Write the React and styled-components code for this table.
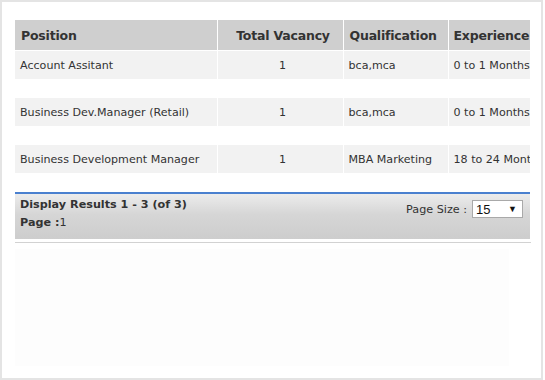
import styled, { createGlobalStyle } from "styled-components";

const Global = createGlobalStyle`
  html, body {
    margin: 0;
    padding: 0;
    background: #ffffff;
  }
  body {
    font-family: Verdana, "DejaVu Sans", sans-serif;
    color: #333333;
  }
`;

const Frame = styled.div`
  box-sizing: border-box;
  width: 543px;
  height: 380px;
  border: 2px solid #e4e4e4;
  background: #ffffff;
  padding: 18px 11px 12px 13px;
  display: flex;
  flex-direction: column;
`;

const Grid = styled.div`
  width: 515px;
  overflow: hidden;
`;

const Table = styled.table`
  width: 533px;
  border-collapse: collapse;
  table-layout: fixed;
  font-size: 11.1px;
`;

const Head = styled.th`
  height: 30px;
  padding: 0 0 0 ${(p) => (p.$tight ? "5px" : "6px")};
  background: #cfcfcf;
  border-right: 1px solid #ffffff;
  border-bottom: 1px solid #ffffff;
  font-size: 12.5px;
  letter-spacing: -0.2px;
  font-weight: bold;
  color: #333333;
  text-align: ${(p) => (p.$center ? "center" : "left")};
  white-space: nowrap;
  overflow: hidden;
`;

const Cell = styled.td`
  height: 28px;
  padding: 0 0 0 5px;
  background: #f2f2f2;
  border-right: 1px solid #ffffff;
  text-align: ${(p) => (p.$center ? "center" : "left")};
  white-space: nowrap;
  overflow: hidden;
`;

const Spacer = styled.td`
  height: 19px;
  padding: 0;
`;

const Pager = styled.div`
  width: 515px;
  box-sizing: border-box;
  border-top: 2px solid #4a80cf;
  background: linear-gradient(180deg, #ececec 0%, #d6d6d6 45%, #cdcdcd 100%);
  height: 47px;
  padding: 4px 8px 0 5px;
  display: flex;
  justify-content: space-between;
  align-items: flex-start;
  font-size: 11.2px;
`;

const Summary = styled.div`
  display: flex;
  flex-direction: column;
  gap: 5px;
  line-height: 13px;
`;

const Strong = styled.span`
  font-weight: bold;
`;

const SizeBox = styled.div`
  display: flex;
  align-items: center;
  gap: 5px;
  margin-right: -1px;
  margin-top: 2px;
`;

const Select = styled.div`
  box-sizing: border-box;
  width: 51px;
  height: 18px;
  background: #ffffff;
  border: 1px solid #a9a9a9;
  display: flex;
  align-items: center;
  justify-content: space-between;
  padding: 0 5px 0 3px;
  font-family: "Liberation Sans", Arial, sans-serif;
  font-size: 13px;
  color: #111111;
`;

const Arrow = styled.span`
  font-size: 9px;
  color: #111111;
`;

const Rule = styled.div`
  width: 516px;
  margin-top: 3px;
  border-top: 1px solid #d2d2d2;
`;

const Blank = styled.div`
  width: 494px;
  flex: 1;
  margin-top: 6px;
  background: #fdfdfd;
`;

const jobs = [
  { pos: "Account Assitant", vac: 1, qual: "bca,mca", exp: "0 to 1 Months" },
  { pos: "Business Dev.Manager (Retail)", vac: 1, qual: "bca,mca", exp: "0 to 1 Months" },
  { pos: "Business Development Manager", vac: 1, qual: "MBA Marketing", exp: "18 to 24 Months" },
];

export default function App() {
  return (
    <>
      <Global />
      <Frame>
        <Grid>
          <Table>
            <colgroup>
              <col style={{ width: 202 }} />
              <col style={{ width: 126 }} />
              <col style={{ width: 105 }} />
              <col style={{ width: 100 }} />
            </colgroup>
            <thead>
              <tr>
                <Head>Position</Head>
                <Head $center>Total Vacancy</Head>
                <Head>Qualification</Head>
                <Head $tight>Experience</Head>
              </tr>
            </thead>
            <tbody>
              {jobs.flatMap((j) => [
                <tr key={j.pos}>
                  <Cell>{j.pos}</Cell>
                  <Cell $center>{j.vac}</Cell>
                  <Cell>{j.qual}</Cell>
                  <Cell>{j.exp}</Cell>
                </tr>,
                <tr key={j.pos + "-gap"}>
                  <Spacer colSpan={4} />
                </tr>,
              ])}
            </tbody>
          </Table>
        </Grid>
        <Pager>
          <Summary>
            <Strong>Display Results 1 - 3 (of 3)</Strong>
            <span>
              <Strong>Page :</Strong>1
            </span>
          </Summary>
          <SizeBox>
            <span>Page Size :</span>
            <Select>
              <span>15</span>
              <Arrow>▼</Arrow>
            </Select>
          </SizeBox>
        </Pager>
        <Rule />
        <Blank />
      </Frame>
    </>
  );
}
